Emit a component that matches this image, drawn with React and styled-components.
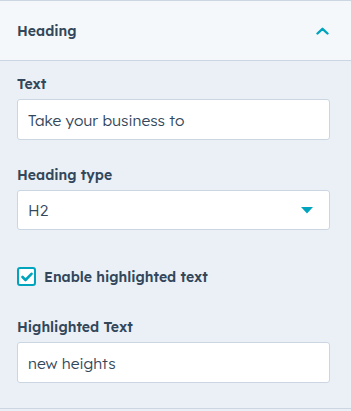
import React from "react";
import styled, { createGlobalStyle } from "styled-components";

const Global = createGlobalStyle`
  html, body { margin: 0; padding: 0; background: #eaf0f6; }
  body { font-family: "Lexend Deca", "Noto Sans", "Open Sans", sans-serif; color: #33475b; }
`;

const Panel = styled.div`
  width: 351px;
  box-sizing: border-box;
  border-top: 1px solid #cbd6e2;
  border-bottom: 1px solid #cbd6e2;
  background: #eaf0f6;
`;

const Header = styled.div`
  height: 59px;
  box-sizing: content-box;
  display: flex;
  align-items: center;
  justify-content: space-between;
  padding: 0 22px 0 17px;
  background: #f5f8fa;
  border-bottom: 1px solid #cbd6e2;
`;

const Title = styled.span`
  font-size: 14px;
  font-weight: 600;
  color: #33475b;
  margin-top: 1px;
`;

const Body = styled.div`
  display: flex;
  flex-direction: column;
  padding: 13px 21px 25px 17px;
`;

const Field = styled.div`
  display: flex;
  flex-direction: column;
  margin-top: ${(p) => p.$top || 0}px;
`;

const Label = styled.label`
  font-size: 14px;
  font-weight: 600;
  line-height: 20px;
  color: #33475b;
  margin-bottom: 5px;
`;

const Input = styled.div`
  height: ${(p) => p.$h || 41}px;
  box-sizing: border-box;
  background: #fff;
  border: 1px solid #cbd6e2;
  border-radius: 3px;
  display: flex;
  align-items: center;
  justify-content: space-between;
  padding: 0 16px 0 10px;
  font-size: 15.5px;
  font-weight: 300;
  color: #33475b;
`;

const CheckRow = styled.div`
  display: flex;
  align-items: center;
  gap: 8px;
  margin-top: 37px;
`;

const Box = styled.span`
  width: 19px;
  height: 19px;
  box-sizing: border-box;
  border: 2px solid #00a4bd;
  border-radius: 3px;
  background: #fff;
  display: flex;
  align-items: center;
  justify-content: center;
`;

const CheckText = styled.span`
  font-size: 14px;
  font-weight: 600;
  color: #33475b;
`;

export default function App() {
  return (
    <>
      <Global />
      <Panel>
        <Header>
          <Title>Heading</Title>
          <svg width="13" height="8" viewBox="0 0 13 8">
            <path d="M1.5 6.5 L6.5 1.8 L11.5 6.5" fill="none" stroke="#00a4bd" strokeWidth="2.4" strokeLinecap="round" strokeLinejoin="round" />
          </svg>
        </Header>
        <Body>
          <Field>
            <Label>Text</Label>
            <Input>Take your business to</Input>
          </Field>
          <Field $top={25}>
            <Label>Heading type</Label>
            <Input $h={40}>
              H2
              <svg width="12" height="7" viewBox="0 0 12 7">
                <path d="M0 0 H12 L6 6.5 Z" fill="#00a4bd" />
              </svg>
            </Input>
          </Field>
          <CheckRow>
            <Box>
              <svg width="12" height="10" viewBox="0 0 12 10">
                <path d="M1.5 5 L4.5 8 L10.5 1.8" fill="none" stroke="#00a4bd" strokeWidth="2.6" strokeLinecap="round" strokeLinejoin="round" />
              </svg>
            </Box>
            <CheckText>Enable highlighted text</CheckText>
          </CheckRow>
          <Field $top={31}>
            <Label>Highlighted Text</Label>
            <Input>new heights</Input>
          </Field>
        </Body>
      </Panel>
    </>
  );
}
